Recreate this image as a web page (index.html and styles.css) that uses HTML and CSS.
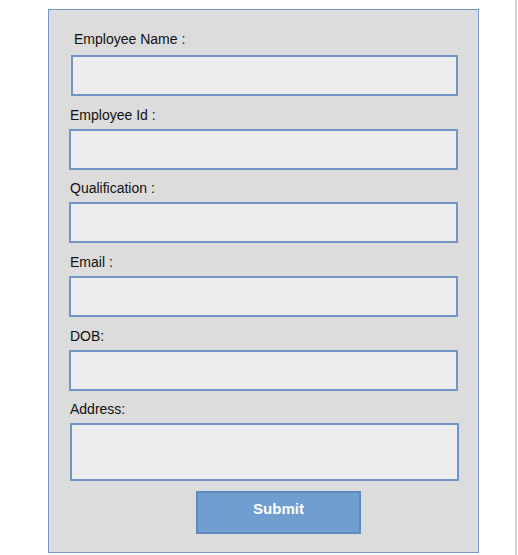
FILE: index.html
```html
<!DOCTYPE html>
<html>
<head>
<meta charset="utf-8">
<link rel="stylesheet" href="styles.css">
</head>
<body>
<div class="page">
  <form class="panel">
    <div class="field first">
      <label class="label">Employee Name :</label>
      <div class="input"></div>
    </div>
    <div class="field tight">
      <label class="label">Employee Id :</label>
      <div class="input"></div>
    </div>
    <div class="field">
      <label class="label">Qualification :</label>
      <div class="input"></div>
    </div>
    <div class="field">
      <label class="label">Email :</label>
      <div class="input"></div>
    </div>
    <div class="field tight">
      <label class="label">DOB:</label>
      <div class="input"></div>
    </div>
    <div class="field address">
      <label class="label">Address:</label>
      <div class="input tall"></div>
    </div>
    <div class="actions">
      <div class="button">Submit</div>
    </div>
  </form>
  <div class="edge"></div>
</div>
</body>
</html>
```
FILE: styles.css
```css
html, body {
  margin: 0;
  padding: 0;
  background: #ffffff;
}
body {
  font-family: "Liberation Sans", Arial, sans-serif;
  font-size: 14px;
  color: #111;
}
.page {
  display: flex;
  width: 518px;
  height: 555px;
}
.panel {
  box-sizing: border-box;
  margin: 9px 0 0 48px;
  width: 431px;
  height: 544px;
  background: #dcdcdc;
  border: 1px solid #7496c9;
  padding: 20px 0 0 20px;
  display: flex;
  flex-direction: column;
}
.field {
  display: flex;
  flex-direction: column;
  margin-bottom: 10px;
}
.field.tight {
  margin-bottom: 9px;
}
.label {
  height: 18px;
  line-height: 18px;
  margin-bottom: 5px;
  padding-left: 1px;
}
.input {
  box-sizing: border-box;
  width: 389px;
  height: 41px;
  background: #ededed;
  border: 2px solid #7394c6;
}
.first .label {
  margin-bottom: 7px;
  padding-left: 5px;
}
.first .input {
  margin-left: 2px;
  width: 387px;
}
.address .input {
  margin-left: 1px;
}
.tall {
  height: 58px;
}
.actions {
  display: flex;
  padding-left: 127px;
}
.button {
  box-sizing: border-box;
  width: 165px;
  height: 43px;
  background: #719ed0;
  border: 2px solid #5f88bd;
  color: #ffffff;
  font-weight: bold;
  font-size: 15px;
  display: flex;
  align-items: center;
  justify-content: center;
  padding-bottom: 8px;
}
.edge {
  margin-left: auto;
  margin-right: 1px;
  width: 2px;
  height: 555px;
  background: #cfcfcf;
}
```
